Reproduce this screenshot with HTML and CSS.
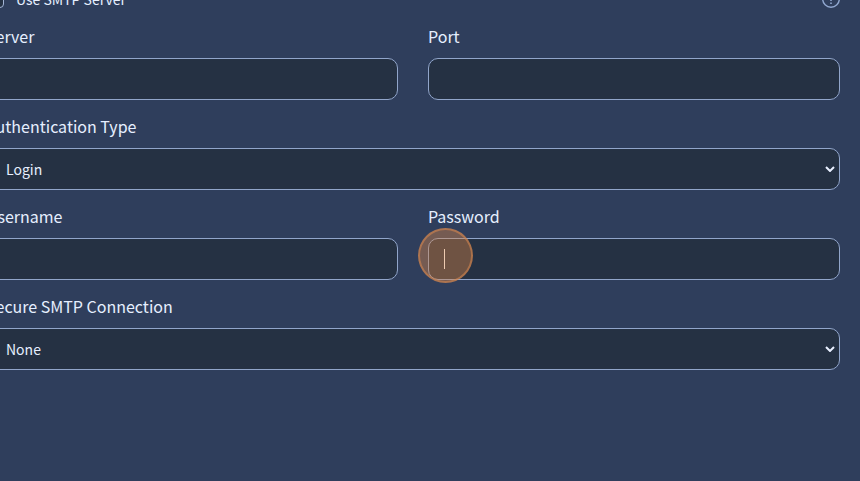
FILE: index.html
```html
<!DOCTYPE html>
<html lang="en">
<head>
<meta charset="utf-8">
<title>SMTP settings</title>
<link rel="stylesheet" href="styles.css">
</head>
<body>
<form class="settings">
  <div class="toggle-row">
    <label class="toggle"><input type="checkbox" class="toggle-box">Use SMTP Server</label>
    <button type="button" class="help" aria-label="Help">
      <svg viewBox="0 0 18 18" width="18" height="18" fill="none" stroke="currentColor" stroke-width="1.4">
        <circle cx="9" cy="9" r="8.3"/>
        <path d="M6.6 6.4a2.5 2.5 0 1 1 3.6 2.2q-1.2.6-1.2 1.8v.6M9 12.4v1.6" stroke-width="1.6"/>
      </svg>
    </button>
  </div>
  <div class="field">
    <label for="server">Server</label>
    <input id="server" class="control" type="text">
  </div>
  <div class="field">
    <label for="port">Port</label>
    <input id="port" class="control" type="text">
  </div>
  <div class="field wide">
    <label for="auth">Authentication Type</label>
    <div class="select-wrap">
      <select id="auth" class="control"><option>Login</option></select>
      <svg class="chevron" viewBox="0 0 10 6" width="10" height="6"><path d="M1 1l4 4 4-4"/></svg>
    </div>
  </div>
  <div class="field">
    <label for="username">Username</label>
    <input id="username" class="control" type="text">
  </div>
  <div class="field">
    <label for="password">Password</label>
    <div class="password-wrap">
      <input id="password" class="control" type="password">
      <span class="caret"></span>
      <span class="click-marker"></span>
    </div>
  </div>
  <div class="field wide">
    <label for="secure">Secure SMTP Connection</label>
    <div class="select-wrap">
      <select id="secure" class="control"><option>None</option></select>
      <svg class="chevron" viewBox="0 0 10 6" width="10" height="6"><path d="M1 1l4 4 4-4"/></svg>
    </div>
  </div>
</form>
</body>
</html>
```
FILE: styles.css
```css
* {
  box-sizing: border-box;
}

body {
  margin: 0;
  min-height: 100vh;
  overflow: hidden;
  background: #2f3e5c;
  color: #e6efff;
  font: 16px/24px "Noto Sans CJK SC", sans-serif;
}

.settings {
  display: grid;
  grid-template-columns: 1fr 1fr;
  gap: 14px 30px;
  margin: -12px 20px 0 -14px;
}

.toggle-row,
.wide {
  grid-column: 1 / -1;
}

.toggle-row {
  display: flex;
  align-items: center;
  justify-content: space-between;
  height: 22px;
}

.toggle {
  display: flex;
  align-items: center;
  gap: 12px;
  font-size: 14px;
}

.toggle-box {
  appearance: none;
  width: 18px;
  height: 18px;
  margin: 0;
  border: 1px solid #a3b5d6;
  border-radius: 4px;
  background: #253143;
}

.help {
  display: flex;
  padding: 0;
  border: 0;
  background: none;
  color: #91a8d0;
}

.field {
  display: flex;
  flex-direction: column;
  gap: 10px;
}

.control {
  display: block;
  width: 100%;
  height: 42px;
  margin: 0;
  padding: 0 15px;
  border: 1px solid #91a5ca;
  border-radius: 10px;
  outline: 0;
  background: #253143;
  color: #e6efff;
  font: inherit;
}

select.control {
  appearance: none;
  padding: 0 19px;
  font-size: 14px;
}

.select-wrap,
.password-wrap {
  position: relative;
}

.chevron {
  position: absolute;
  top: 18px;
  right: 5px;
  fill: none;
  stroke: #e8efff;
  stroke-width: 2;
}

.caret {
  position: absolute;
  top: 11px;
  left: 16px;
  width: 1px;
  height: 20px;
  background: #ffffff;
}

.click-marker {
  position: absolute;
  top: -10px;
  left: -10px;
  width: 55px;
  height: 55px;
  border: 2px solid rgba(210, 133, 80, 0.6);
  border-radius: 50%;
  background: rgba(215, 130, 70, 0.42);
}
```
